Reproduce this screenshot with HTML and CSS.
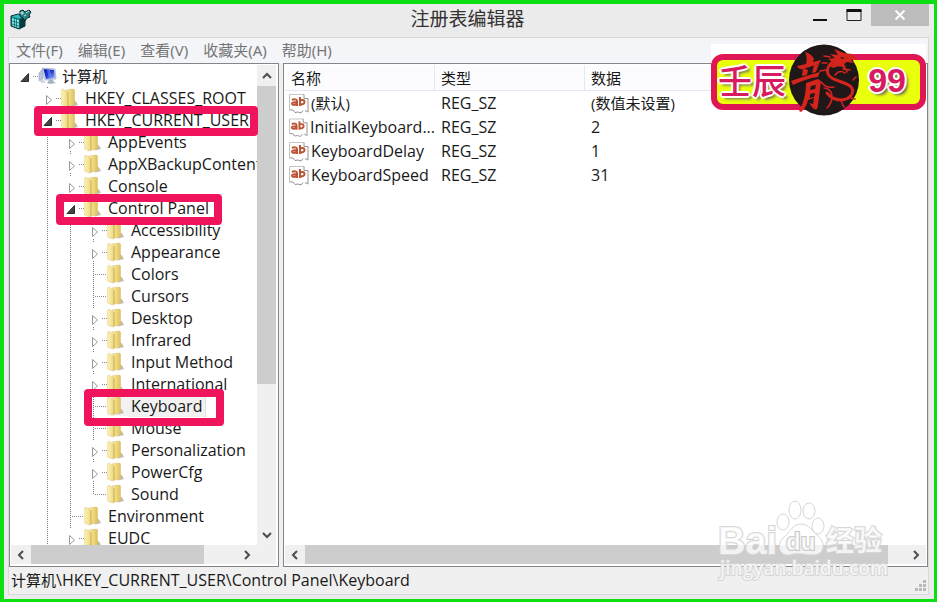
FILE: index.html
```html
<!DOCTYPE html>
<html lang="zh-CN">
<head>
<meta charset="utf-8">
<title>注册表编辑器</title>
<link rel="stylesheet" href="styles.css">
</head>
<body>
<svg class="defs" aria-hidden="true">
  <defs>
    <linearGradient id="gBack" x1="0" x2="1"><stop offset="0" stop-color="#fbeea8"/><stop offset="1" stop-color="#dcbc50"/></linearGradient>
    <linearGradient id="gFront" x1="0" x2="1"><stop offset="0" stop-color="#fdf3bd"/><stop offset="1" stop-color="#efd77c"/></linearGradient>
    <linearGradient id="gScreen" x1="0" x2="1" y2="1"><stop offset="0" stop-color="#0a1aa0"/><stop offset=".5" stop-color="#1c35d8"/><stop offset="1" stop-color="#a9c4f8"/></linearGradient>
    <symbol id="folder" viewBox="0 0 18 20" preserveAspectRatio="xMinYMid">
      <path d="M11 18.500 17 17 15 13.500 12 12z" fill="#bdbdbd"/>
      <path d="M5 2 12.500 1 13.500 2V13l1 2-2 2.500L5 18z" fill="url(#gBack)" stroke="#d4bb68" stroke-width=".5"/>
      <path d="M0 2.500 2 1 6.500 4.500 7 19 4 18.500 0 16.500z" fill="url(#gFront)" stroke="#dcc67c" stroke-width=".5"/>
      <path d="M7 4v14" stroke="#c4a548" stroke-width=".8"/>
    </symbol>
    <symbol id="computer" viewBox="0 0 20 18" preserveAspectRatio="xMinYMid">
      <path d="M1 6 4 2.500 5 3v9l-4 2z" fill="#b8c6da" stroke="#8796b0" stroke-width=".5"/>
      <path d="M4 1 17 2l1 10-11 1z" fill="#d9e1ef" stroke="#8c9cc0" stroke-width=".6"/>
      <path d="M5.500 2 16 3l1 8-9 1z" fill="url(#gScreen)"/>
      <path d="M9 3 12 3.300 15 11.200 11 11.600z" fill="#6d8cf0" opacity=".6"/>
      <path d="M11 13h4l1 2 2 1-6 1-3-1z" fill="#a8b3c5"/>
      <path d="M1 13.500 5 12.500 8 15.500 4 16z" fill="#cdd5e2"/>
    </symbol>
    <symbol id="open" viewBox="0 0 14 22"><path d="M10.500 6.500v8H3z" fill="#444" stroke="#2d2d2d"/></symbol>
    <symbol id="closed" viewBox="0 0 14 22"><path d="M5.500 6.500v9l5-4.500z" fill="#fff" stroke="#999"/></symbol>
    <symbol id="value" viewBox="0 0 20 21">
      <path d="M.5 1.500H15l4 4V17l-2 2-2-2.500-2 1-3 2-3-.500L5 17H.5z" fill="#fff"/>
      <path d="M.5 17V1.500H15" fill="none" stroke="#c4c4c4"/>
      <path d="M15 1.500v4h4V19l-3-1.500M.5 17H4l2 2.500 3-.500 3 1 2-2.500" fill="none" stroke="#8f9297"/>
      <g fill="none" stroke="#bd5534" stroke-width="2"><path d="M3 7c2-1 5-1 5 1v5M8 9C4 9 3 9.500 3 10.500c0 2 3.500 1.500 5 0M11 4v9M11 8c1-1.500 4.500-1.500 4.500 1s-3.500 3-4.500 1.500"/></g>
    </symbol>
    <symbol id="chev" viewBox="0 0 10 10"><path d="M7 1 3 5l4 4" fill="none" stroke="#4c4c4c" stroke-width="2"/></symbol>
  </defs>
</svg>

<div class="window">
  <header class="titlebar">
    <svg class="app-icon" viewBox="0 0 22 22" aria-hidden="true">
      <path d="M1 8 8 6l7 2v10l-6 3-8-3z" fill="#0d7b80" stroke="#082f33"/>
      <path d="M1.500 8.500 8 6.500l6 2-5 2z" fill="#35b8b8"/>
      <path d="M2 10v7.500l7 2.500v-8z" fill="#7fe8e4"/>
      <path d="M4.500 10v8M6.500 11v8M2 13l7 2M2 16l7 2" stroke="#0b6468" stroke-width=".8"/>
      <path d="M9.500 11.500 15 9v9l-5.500 2.500z" fill="#063b40"/>
      <path d="m10 3 3-1 2 2 4-2 2 2-2 3 1 2-3 1-2 3-2-3-3-2z" fill="#2b8085" stroke="#08282c"/>
      <path d="M11 4h2v2h-2zM16 5l3-2M14 8l2-1" stroke="#b5ece9" fill="none"/>
    </svg>
    <h1>注册表编辑器</h1>
    <div class="window-buttons">
      <button type="button" aria-label="最小化"><svg viewBox="0 0 16 12"><path d="M1 11h14" stroke="#111" stroke-width="2"/></svg></button>
      <button type="button" aria-label="最大化"><svg viewBox="0 0 16 12"><path d="M1 1v10.500h14V1" fill="none" stroke="#222"/><path d="M.5 1.500h15" stroke="#111" stroke-width="3"/></svg></button>
      <button type="button" class="close" aria-label="关闭"><svg viewBox="0 0 16 12"><path d="m3.500 1.500 9 9M12.500 1.500l-9 9" stroke="#fff" stroke-width="2"/></svg></button>
    </div>
  </header>

  <div class="client">
    <nav class="menubar">
      <button type="button">文件(F)</button>
      <button type="button">编辑(E)</button>
      <button type="button">查看(V)</button>
      <button type="button">收藏夹(A)</button>
      <button type="button">帮助(H)</button>
    </nav>

    <main class="panes">
      <section class="pane tree-pane">
        <div class="tree-view">
          <ul class="tree">
            <li>
              <div class="node root"><button type="button" aria-label="折叠"><svg><use href="#open"/></svg></button><svg class="icon"><use href="#computer"/></svg><span>计算机</span></div>
              <ul>
                <li><div class="node"><button type="button" aria-label="展开"><svg><use href="#closed"/></svg></button><svg class="icon"><use href="#folder"/></svg><span>HKEY_CLASSES_ROOT</span></div></li>
                <li>
                  <div class="node"><button type="button" aria-label="折叠"><svg><use href="#open"/></svg></button><svg class="icon"><use href="#folder"/></svg><span>HKEY_CURRENT_USER</span></div>
                  <ul>
                    <li><div class="node"><button type="button" aria-label="展开"><svg><use href="#closed"/></svg></button><svg class="icon"><use href="#folder"/></svg><span>AppEvents</span></div></li>
                    <li><div class="node"><button type="button" aria-label="展开"><svg><use href="#closed"/></svg></button><svg class="icon"><use href="#folder"/></svg><span>AppXBackupContentType</span></div></li>
                    <li><div class="node"><button type="button" aria-label="展开"><svg><use href="#closed"/></svg></button><svg class="icon"><use href="#folder"/></svg><span>Console</span></div></li>
                    <li>
                      <div class="node"><button type="button" aria-label="折叠"><svg><use href="#open"/></svg></button><svg class="icon"><use href="#folder"/></svg><span>Control Panel</span></div>
                      <ul>
                        <li><div class="node"><button type="button" aria-label="展开"><svg><use href="#closed"/></svg></button><svg class="icon"><use href="#folder"/></svg><span>Accessibility</span></div></li>
                        <li><div class="node"><button type="button" aria-label="展开"><svg><use href="#closed"/></svg></button><svg class="icon"><use href="#folder"/></svg><span>Appearance</span></div></li>
                        <li><div class="node leaf"><svg class="icon"><use href="#folder"/></svg><span>Colors</span></div></li>
                        <li><div class="node leaf"><svg class="icon"><use href="#folder"/></svg><span>Cursors</span></div></li>
                        <li><div class="node"><button type="button" aria-label="展开"><svg><use href="#closed"/></svg></button><svg class="icon"><use href="#folder"/></svg><span>Desktop</span></div></li>
                        <li><div class="node"><button type="button" aria-label="展开"><svg><use href="#closed"/></svg></button><svg class="icon"><use href="#folder"/></svg><span>Infrared</span></div></li>
                        <li><div class="node"><button type="button" aria-label="展开"><svg><use href="#closed"/></svg></button><svg class="icon"><use href="#folder"/></svg><span>Input Method</span></div></li>
                        <li><div class="node"><button type="button" aria-label="展开"><svg><use href="#closed"/></svg></button><svg class="icon"><use href="#folder"/></svg><span>International</span></div></li>
                        <li><div class="node leaf selected"><svg class="icon"><use href="#folder"/></svg><span>Keyboard</span></div></li>
                        <li><div class="node leaf"><svg class="icon"><use href="#folder"/></svg><span>Mouse</span></div></li>
                        <li><div class="node"><button type="button" aria-label="展开"><svg><use href="#closed"/></svg></button><svg class="icon"><use href="#folder"/></svg><span>Personalization</span></div></li>
                        <li><div class="node"><button type="button" aria-label="展开"><svg><use href="#closed"/></svg></button><svg class="icon"><use href="#folder"/></svg><span>PowerCfg</span></div></li>
                        <li class="last"><div class="node leaf"><svg class="icon"><use href="#folder"/></svg><span>Sound</span></div></li>
                      </ul>
                    </li>
                    <li><div class="node leaf"><svg class="icon"><use href="#folder"/></svg><span>Environment</span></div></li>
                    <li><div class="node"><button type="button" aria-label="展开"><svg><use href="#closed"/></svg></button><svg class="icon"><use href="#folder"/></svg><span>EUDC</span></div></li>
                  </ul>
                </li>
              </ul>
            </li>
          </ul>
        </div>
        <div class="scroll vertical">
          <button type="button" aria-label="向上"><svg class="up"><use href="#chev"/></svg></button>
          <div class="track"><div class="thumb"></div></div>
          <button type="button" aria-label="向下"><svg class="down"><use href="#chev"/></svg></button>
        </div>
        <div class="scroll horizontal">
          <button type="button" aria-label="向左"><svg><use href="#chev"/></svg></button>
          <div class="track"><div class="thumb"></div></div>
          <button type="button" aria-label="向右"><svg class="right"><use href="#chev"/></svg></button>
        </div>
        <div class="corner"></div>
        <div class="mark mark-user"></div>
        <div class="mark mark-panel"></div>
        <div class="mark mark-keyboard"></div>
      </section>

      <section class="pane value-pane">
        <div class="value-view">
          <table>
            <colgroup><col class="col"><col class="col"><col></colgroup>
            <thead><tr><th>名称</th><th>类型</th><th>数据</th></tr></thead>
            <tbody>
              <tr><td><div class="name"><svg><use href="#value"/></svg><span class="cjk">(默认)</span></div></td><td>REG_SZ</td><td class="cjk">(数值未设置)</td></tr>
              <tr><td><div class="name"><svg><use href="#value"/></svg><span>InitialKeyboard...</span></div></td><td>REG_SZ</td><td>2</td></tr>
              <tr><td><div class="name"><svg><use href="#value"/></svg><span>KeyboardDelay</span></div></td><td>REG_SZ</td><td>1</td></tr>
              <tr><td><div class="name"><svg><use href="#value"/></svg><span>KeyboardSpeed</span></div></td><td>REG_SZ</td><td>31</td></tr>
            </tbody>
          </table>
        </div>
        <div class="scroll horizontal">
          <button type="button" aria-label="向左"><svg><use href="#chev"/></svg></button>
          <div class="track"><div class="thumb"></div></div>
          <button type="button" aria-label="向右"><svg class="right"><use href="#chev"/></svg></button>
        </div>
      </section>
    </main>

    <footer class="statusbar">
      <span><span class="cjk">计算机</span>\HKEY_CURRENT_USER\Control Panel\Keyboard</span>
      <svg class="grip" viewBox="0 0 12 12" aria-hidden="true"><path d="M8 0h3v3H8zM4 4h3v3H4zM8 4h3v3H8zM0 8h3v3H0zM4 8h3v3H4zM8 8h3v3H8z" fill="#b9b9b9"/></svg>
    </footer>
  </div>

  <div class="badge">
    <div class="plate"><span class="era">壬辰</span><span class="num">99</span></div>
    <svg class="seal" viewBox="0 0 70 72" aria-hidden="true">
      <ellipse cx="35" cy="36" rx="35" ry="35.500" fill="#1f1718"/>
      <g fill="#d3241d">
        <path d="M16 8c4 1 8 4 9 7l-1 3 8-2-2 4-16 5c-3 1-5-1-6-3l9-2c1-4 1-8-1-12z"/>
        <path d="m14 24 5 2-1 5-5 1zM25 21l5-1-3 8-4 1z"/>
        <path d="M2 37c8-3 18-6 29-9l-2 5C21 34 12 37 4 41z"/>
        <path fill-rule="evenodd" d="m17 39 12-4 3 2-3 24c0 5-3 6-6 2l-3-4 4 1 1-6-6 2c-1 5-3 9-7 12l-2-1c4-7 7-16 7-28zm5 3-1 4 5-1 1-4zm-1 8v4l4-1 1-4z"/>
        <path d="m45 5 10 4 8 1 5 5-6 1 3 3-7-1-3 2 2 3-8-2-4 3-6-2 6-3-6-4 7-1-5-4 8 1z"/>
      </g>
      <g fill="none" stroke="#d3241d" stroke-linecap="round" stroke-linejoin="round">
        <path d="M47 16c-6 3-10 8-8 14 3 7 16 7 22 12 6 5 1 13-8 14-7 0-12-3-15-7" stroke-width="3"/>
        <path d="M41 13l-6-1M38 19l-5 0M37 26l-6 1M47 22c6-1 10 1 11 6M54 25l7 1M46 31c3-4 7-4 10-2M64 36l3-3M35 44c4 0 8 3 8 8s-2 9-5 12M62 54l4 1M52 57l3 6M32 38c4 5 8 6 13 5" stroke-width="1.600"/>
      </g>
      <path d="m51 13 5 1-3 1z" fill="#1f1718"/>
    </svg>
  </div>

  <svg class="watermark" viewBox="0 0 172 84" aria-hidden="true">
    <g class="wm-shape">
      <ellipse cx="67" cy="23" rx="6" ry="8"/><ellipse cx="79" cy="11" rx="6" ry="9"/><ellipse cx="93" cy="12" rx="6" ry="8"/><ellipse cx="102" cy="27" rx="6" ry="8"/>
      <path d="M85 25c8 0 11 7 17 12 6 4 9 18-4 19-9 0-16-3-24 0-13 1-13-12-6-18s9-13 17-13z"/>
    </g>
    <text class="wm-logo" x="2" y="55">Bai</text>
    <text class="wm-du" x="70" y="51">du</text>
    <text class="wm-cn" x="110" y="52">经验</text>
    <text class="wm-url" x="4" y="76">jingyan.baidu.com</text>
  </svg>
</div>
</body>
</html>
```
FILE: styles.css
```css
* { box-sizing: border-box; }

body {
  margin: 0;
  font: 16px/22px "Open Sans", "Noto Sans CJK SC", sans-serif;
  color: #191919;
}

button {
  margin: 0;
  padding: 0;
  border: 0;
  background: none;
  font: inherit;
  color: inherit;
}

ul { margin: 0; padding: 0; list-style: none; }
.defs { position: absolute; width: 0; height: 0; }

.window {
  position: relative;
  display: flex;
  flex-direction: column;
  height: 100vh;
  border: 4px solid #0bdf12;
  border-width: 4px 3px 3px 4px;
  background: #ebebeb;
}

/* Title bar */
.titlebar {
  display: grid;
  grid-template-columns: 1fr auto 1fr;
  align-items: start;
  height: 33px;
  padding: 0 5px 0 6px;
}
.app-icon { width: 22px; height: 22px; margin-top: 4px; }
.titlebar h1 {
  margin: 0;
  padding-right: 4px;
  font-size: 19px;
  font-weight: 400;
  line-height: 31px;
  color: #333;
}
.window-buttons { display: flex; justify-content: flex-end; }
.window-buttons button { display: grid; place-items: center; width: 34px; height: 22px; }
.window-buttons svg { width: 16px; height: 12px; }
.window-buttons .close { width: 58px; background: #bcbcbc; }

.client {
  flex: 1;
  min-height: 0;
  display: flex;
  flex-direction: column;
  margin: 0 5px 4px 4px;
  border: 1px solid #d9d9dc;
  background: #f0f0f0;
}

.menubar {
  display: flex;
  gap: 15px;
  height: 25px;
  padding: 0 7px;
  background: #f4f5f9;
  color: #757575;
  font: 15px/25px "Noto Sans", "Noto Sans CJK SC", sans-serif;
}

/* Panes */
.panes {
  flex: 1;
  min-height: 0;
  display: grid;
  grid-template-columns: 270px minmax(0, 1fr);
  gap: 4px;
}
.pane {
  position: relative;
  min-width: 0;
  min-height: 0;
  border: 1px solid #82858c;
  background: #fff;
}
.tree-pane {
  display: grid;
  grid-template: minmax(0, 1fr) 19px / minmax(0, 1fr) 19px;
  padding: 1px 2px 2px 1px;
}
.tree-view { overflow: hidden; }
.tree { padding-left: 7px; }
.tree ul { padding-left: 23px; }
.tree li { position: relative; }
.tree li li::before {
  content: "";
  position: absolute;
  top: 0;
  bottom: 0;
  left: 6px;
  width: 1px;
  background: repeating-linear-gradient(#777 0 1px, transparent 1px 2px);
}
.tree li.last::before { bottom: 11px; }

.node { position: relative; display: flex; align-items: center; height: 22px; white-space: nowrap; }
.node::before {
  content: "";
  flex: none;
  order: 1;
  width: 6px;
  height: 1px;
  background: repeating-linear-gradient(90deg, transparent 0 1px, #888 1px 2px);
}
.node.leaf::before { width: 13px; margin-left: 7px; }
.node button { flex: none; width: 14px; height: 18px; background: #fff; display: grid; place-items: center; }
.node button svg { width: 14px; height: 22px; }
.node .icon { flex: none; order: 2; width: 20px; height: 20px; margin-right: 4px; }
.node span { order: 3; }
.root span, .cjk, th { font-size: 15px; }
.selected .icon { background: #f2f2f2; }
.selected span { padding-right: 3px; background: #f2f2f2; box-shadow: -4px 0 #f2f2f2, 1px 0 #ddd; }

/* Scroll bars */
.scroll { display: flex; background: #f0f0f0; }
.scroll button { flex: none; display: grid; place-items: center; width: 20px; height: 19px; }
.scroll svg { width: 10px; height: 10px; }
.scroll .right { transform: rotate(180deg); }
.scroll .up { transform: rotate(90deg); }
.scroll .down { transform: rotate(-90deg); }
.vertical { flex-direction: column; }
.vertical button { width: 19px; height: 21px; }
.track { flex: 1; min-width: 0; min-height: 0; }
.thumb { height: 100%; background: #cdcdcd; }
.vertical .thumb { height: 68%; }
.tree-pane .horizontal .thumb { width: 84%; }
.corner { background: #f0f0f0; }

/* Highlight frames drawn over the tree */
.mark { position: absolute; border: 8px solid #f0145c; border-radius: 4px; }
.mark-user { left: 24px; top: 42px; width: 224px; height: 30px; }
.mark-panel { left: 46px; top: 130px; width: 166px; height: 31px; }
.mark-keyboard { left: 74px; top: 325px; width: 140px; height: 37px; }

/* Values */
.value-pane {
  display: grid;
  grid-template-rows: minmax(0, 1fr) 19px;
  padding: 1px 1px 2px;
}
.value-view { overflow: hidden; }
.value-view table { width: 100%; border-collapse: separate; border-spacing: 0; table-layout: fixed; }
.col { width: 150px; }
th, td { height: 24px; padding: 0 0 0 6px; text-align: left; font-weight: 400; white-space: nowrap; }
th { height: 26px; background: #fcfcfe; border-bottom: 1px solid #e3e8f2; border-right: 1px solid #e3e8f2; }
th:last-child { border-right: 0; }
td:first-child { padding-left: 4px; }
.name { display: flex; align-items: center; gap: 2px; }
.name svg { width: 20px; height: 21px; }
.value-pane .thumb { width: 97%; }

.statusbar {
  display: flex;
  justify-content: space-between;
  align-items: flex-end;
  height: 27px;
  padding: 0 1px 0 2px;
  line-height: 27px;
}
.grip { width: 12px; height: 12px; margin: 0 0 2px; }

/* Badge */
.badge { position: absolute; top: 40px; right: 8px; width: 215px; padding-top: 10px; background: #fff; }
.plate {
  display: flex;
  align-items: center;
  justify-content: space-between;
  height: 56px;
  padding: 0 14px 0 1px;
  border: 6px solid #df1755;
  border-radius: 12px;
  background: #e9ff0c;
  color: #d81b60;
  text-shadow: 2px 0 #fff, -2px 0 #fff, 0 2px #fff, 0 -2px #fff, 1px 1px #fff, -1px -1px #fff, 1px -1px #fff, -1px 1px #fff, 3px 3px 3px #666;
}
.era { font: 500 34px/40px "Noto Sans CJK SC", sans-serif; }
.num { font: 700 34px/40px "Liberation Sans", sans-serif; }
.plate span { height: 44px; }
.seal { position: absolute; left: 78px; top: 0; width: 70px; height: 72px; }

/* Watermark */
.watermark { position: absolute; right: 46px; bottom: 16px; width: 172px; height: 84px; }
.wm-shape, .watermark text { fill: #fff; fill-opacity: .75; stroke: #d6d6d6; stroke-width: 1px; }
.watermark text { paint-order: stroke; }
.watermark .wm-logo { font: 700 38px "Liberation Sans", sans-serif; stroke-width: 2px; }
.watermark .wm-du { font: 700 24px "Liberation Sans", sans-serif; stroke: #c8c8c8; stroke-width: 2px; }
.watermark .wm-cn { font: 700 28px "Noto Sans CJK SC", sans-serif; stroke-width: 2px; }
.watermark .wm-url { font: 600 19px "Open Sans", sans-serif; stroke-width: 2px; }
```
